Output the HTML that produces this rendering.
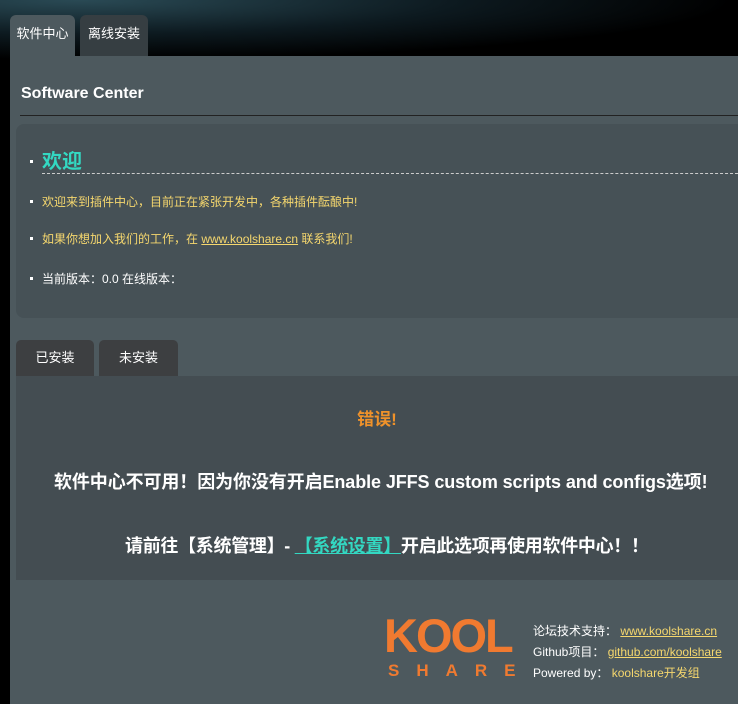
<!DOCTYPE html>
<html><head><meta charset="utf-8"><style>
body{margin:0;width:738px;height:704px;overflow:hidden;background:#000;font-family:"Liberation Sans","Noto Sans CJK SC",sans-serif;position:relative}
.bgtop{position:absolute;left:0;top:0;width:738px;height:60px;background:radial-gradient(ellipse at 80px 0px,#2a4a55 0%,#0d1a20 40%,#000 70%)}
.panel{position:absolute;left:10px;top:56px;width:728px;height:648px;background:#4d595e}
.tab{position:absolute;top:15px;height:41px;border-radius:6px 6px 0 0;color:#fff;font-size:13px;line-height:38px;text-align:center}
.abs{position:absolute}
.inner{position:absolute;left:16px;top:124px;width:730px;height:194px;background:#465156;border-radius:8px}
.li{position:absolute;left:42px;font-size:12px;color:#f5d76e;white-space:nowrap}
.dot{position:absolute;left:30px;width:3px;height:3px;background:#fff}
.t2{position:absolute;top:340px;height:36px;background:#3d3f41;border-radius:5px 5px 0 0;color:#fff;font-size:13px;line-height:36px;text-align:center}
.content{position:absolute;left:16px;top:376px;width:722px;height:204px;background:#444d52}
</style></head><body>
<div class="bgtop"></div>
<div class="tab" style="left:10px;width:65px;background:#4d595e">软件中心</div>
<div class="tab" style="left:80px;width:68px;background:#363e42">离线安装</div>
<div class="panel"></div>
<div class="abs" style="left:21px;top:85px;color:#fff;font-weight:bold;font-size:16px">Software Center</div>
<div class="abs" style="left:20px;top:115px;width:718px;height:1px;background:#222"></div>
<div class="inner"></div>
<div class="dot" style="top:160px"></div>
<div class="abs" style="left:42px;top:145px;font-size:20px;font-weight:bold;color:#33d8c2">欢迎</div>
<div class="abs" style="left:42px;top:173px;width:696px;border-top:1px dashed #ccc"></div>
<div class="dot" style="top:200px"></div>
<div class="li" style="top:193px">欢迎来到插件中心，目前正在紧张开发中，各种插件酝酿中!</div>
<div class="dot" style="top:237px"></div>
<div class="li" style="top:230px">如果你想加入我们的工作，在 <u>www.koolshare.cn</u> 联系我们!</div>
<div class="dot" style="top:277px"></div>
<div class="li" style="top:270px;color:#fff">当前版本：0.0 在线版本：</div>
<div class="t2" style="left:16px;width:78px">已安装</div>
<div class="t2" style="left:99px;width:79px">未安装</div>
<div class="content"></div>
<div class="abs" style="left:16px;top:405px;width:722px;text-align:center;color:#f0922a;font-weight:bold;font-size:17px">错误!</div>
<div class="abs" style="left:54px;top:468px;color:#fff;font-weight:bold;font-size:18px;letter-spacing:-0.1px;white-space:nowrap">软件中心不可用！因为你没有开启Enable JFFS custom scripts and configs选项!</div>
<div class="abs" style="left:125px;top:532px;color:#fff;font-weight:bold;font-size:18px;letter-spacing:-0.3px;white-space:nowrap">请前往【系统管理】- <u style="color:#33d8c2">【系统设置】</u>开启此选项再使用软件中心！！</div>
<div class="abs" style="left:384px;top:614px;color:#f07a30;font-weight:bold;font-size:47px;letter-spacing:-2px;line-height:44px">KOOL</div>
<div class="abs" style="left:388px;top:661px;color:#f07a30;font-weight:bold;font-size:17px;letter-spacing:17px">SHARE</div>
<div class="abs" style="left:533px;top:621px;color:#fff;font-size:12px;line-height:21px;white-space:nowrap">论坛技术支持： <u style="color:#f5d76e">www.koolshare.cn</u><br>Github项目： <u style="color:#f5d76e">github.com/koolshare</u><br>Powered by： <span style="color:#f5d76e">koolshare开发组</span></div>
</body></html>
